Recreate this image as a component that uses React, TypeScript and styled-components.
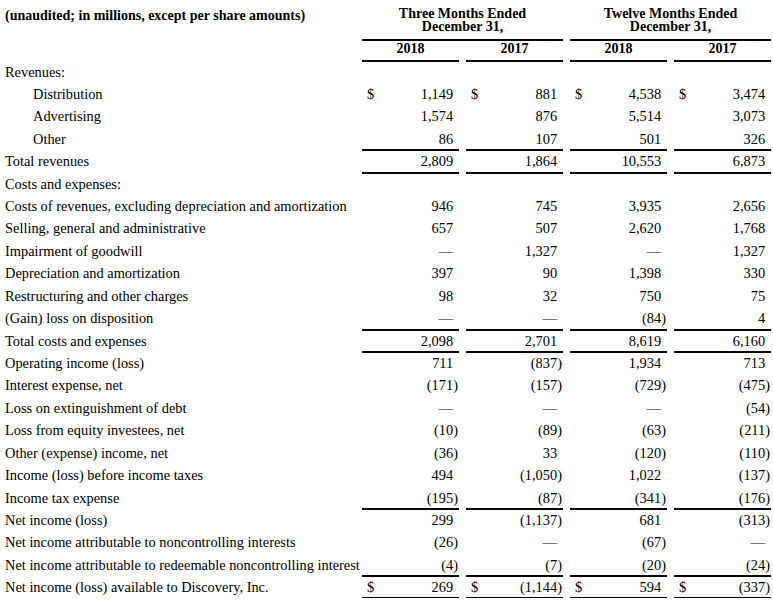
import React from "react";
import styled, { createGlobalStyle } from "styled-components";

const GlobalStyle = createGlobalStyle`
  html, body { margin: 0; padding: 0; background: #fff; }
  body {
    font-family: "Liberation Serif", "Times New Roman", serif;
    color: #000;
  }
`;

const COLS = "355px repeat(4, 97px)";

const Sheet = styled.div`
  width: 773px;
`;

const HeaderGrid = styled.div`
  display: grid;
  grid-template-columns: ${COLS};
  column-gap: 7px;
  font-weight: bold;
  font-size: 14px;
`;

const Caption = styled.div`
  grid-row: 1 / span 2;
  padding: 8px 0 0 5px;
  line-height: 16px;
  white-space: nowrap;
`;

const GroupHead = styled.div`
  grid-column: span 2;
  text-align: center;
  line-height: 13.5px;
  padding: 6.5px 0 5px;
  border-bottom: 2px solid #000;
`;

const YearHead = styled.div`
  text-align: center;
  line-height: 16px;
  padding-bottom: 3px;
  border-bottom: 2px solid #000;
`;

const Body = styled.div`
  font-size: 14.4px;
`;

const Row = styled.div`
  display: grid;
  grid-template-columns: ${COLS};
  column-gap: 7px;
  height: 22.43px;
`;

const Label = styled.div<{ $indent?: boolean }>`
  padding-left: ${(p) => (p.$indent ? 33 : 5)}px;
  line-height: 20px;
  white-space: nowrap;
`;

type Rule = "none" | "single" | "double";

const Cell = styled.div<{ $rule: Rule }>`
  box-sizing: border-box;
  display: flex;
  justify-content: space-between;
  line-height: 20px;
  padding: 0 1px 0 5px;
  border-bottom: ${(p) =>
    p.$rule === "single"
      ? "2px solid #000"
      : p.$rule === "double"
      ? "4px double #000"
      : "none"};
`;

const Hang = styled.span`
  visibility: hidden;
`;

type Line = {
  label: string;
  indent?: boolean;
  values?: string[];
  dollar?: boolean;
  rule?: Rule;
};

const D = "\u2014";

const lines: Line[] = [
  { label: "Revenues:" },
  { label: "Distribution", indent: true, dollar: true, values: ["1,149", "881", "4,538", "3,474"] },
  { label: "Advertising", indent: true, values: ["1,574", "876", "5,514", "3,073"] },
  { label: "Other", indent: true, values: ["86", "107", "501", "326"], rule: "single" },
  { label: "Total revenues", values: ["2,809", "1,864", "10,553", "6,873"], rule: "single" },
  { label: "Costs and expenses:" },
  { label: "Costs of revenues, excluding depreciation and amortization", values: ["946", "745", "3,935", "2,656"] },
  { label: "Selling, general and administrative", values: ["657", "507", "2,620", "1,768"] },
  { label: "Impairment of goodwill", values: [D, "1,327", D, "1,327"] },
  { label: "Depreciation and amortization", values: ["397", "90", "1,398", "330"] },
  { label: "Restructuring and other charges", values: ["98", "32", "750", "75"] },
  { label: "(Gain) loss on disposition", values: [D, D, "(84)", "4"], rule: "single" },
  { label: "Total costs and expenses", values: ["2,098", "2,701", "8,619", "6,160"], rule: "single" },
  { label: "Operating income (loss)", values: ["711", "(837)", "1,934", "713"] },
  { label: "Interest expense, net", values: ["(171)", "(157)", "(729)", "(475)"] },
  { label: "Loss on extinguishment of debt", values: [D, D, D, "(54)"] },
  { label: "Loss from equity investees, net", values: ["(10)", "(89)", "(63)", "(211)"] },
  { label: "Other (expense) income, net", values: ["(36)", "33", "(120)", "(110)"] },
  { label: "Income (loss) before income taxes", values: ["494", "(1,050)", "1,022", "(137)"] },
  { label: "Income tax expense", values: ["(195)", "(87)", "(341)", "(176)"], rule: "single" },
  { label: "Net income (loss)", values: ["299", "(1,137)", "681", "(313)"] },
  { label: "Net income attributable to noncontrolling interests", values: ["(26)", D, "(67)", D] },
  { label: "Net income attributable to redeemable noncontrolling interest", values: ["(4)", "(7)", "(20)", "(24)"], rule: "single" },
  { label: "Net income (loss) available to Discovery, Inc.", dollar: true, values: ["269", "(1,144)", "594", "(337)"], rule: "double" },
];

const Amount: React.FC<{ value: string }> = ({ value }) => (
  <span>
    {value}
    {!value.startsWith("(") && <Hang>)</Hang>}
  </span>
);

export default function App() {
  return (
    <>
      <GlobalStyle />
      <Sheet>
        <HeaderGrid>
          <Caption>(unaudited; in millions, except per share amounts)</Caption>
          <GroupHead>
            Three Months Ended
            <br />
            December 31,
          </GroupHead>
          <GroupHead>
            Twelve Months Ended
            <br />
            December 31,
          </GroupHead>
          <YearHead>2018</YearHead>
          <YearHead>2017</YearHead>
          <YearHead>2018</YearHead>
          <YearHead>2017</YearHead>
        </HeaderGrid>
        <Body>
          {lines.map((l, i) => (
            <Row key={i}>
              <Label $indent={l.indent}>{l.label}</Label>
              {l.values &&
                l.values.map((v, j) => (
                  <Cell key={j} $rule={l.rule ?? "none"}>
                    <span>{l.dollar ? "$" : ""}</span>
                    <Amount value={v} />
                  </Cell>
                ))}
            </Row>
          ))}
        </Body>
      </Sheet>
    </>
  );
}
